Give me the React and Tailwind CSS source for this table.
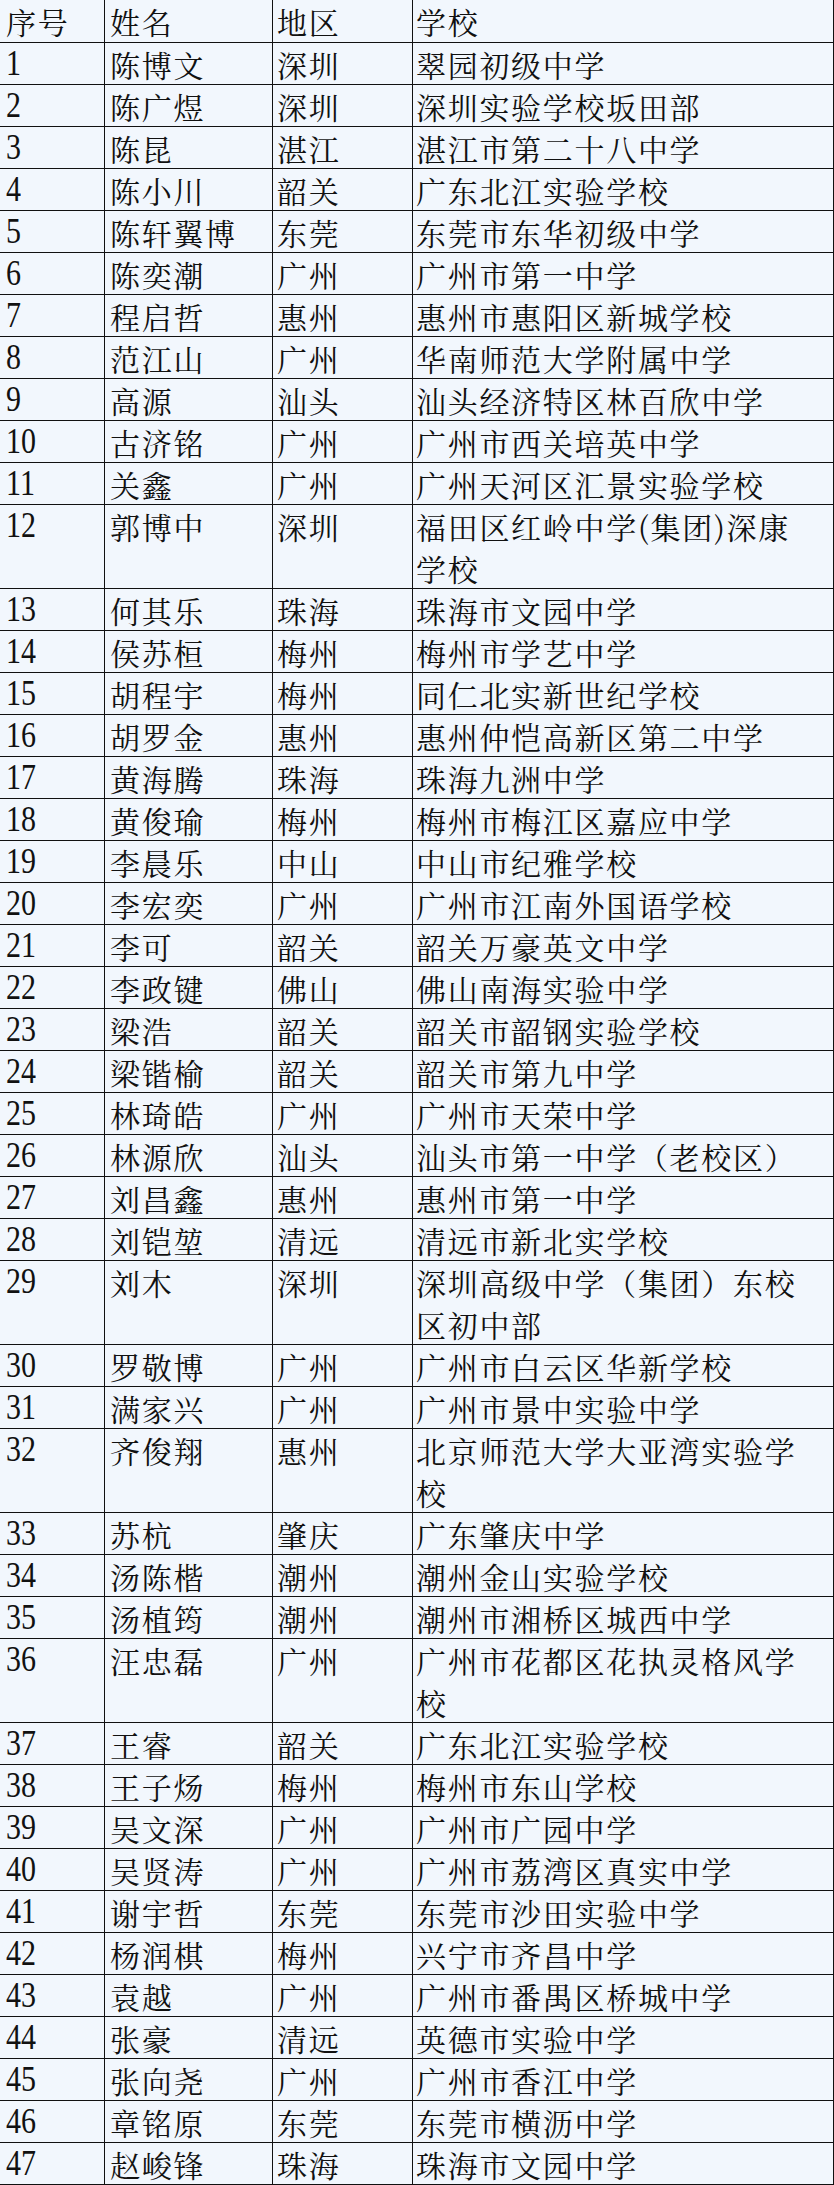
import React from "react";

const rows = [
  ["1", "陈博文", "深圳", ["翠园初级中学"]],
  ["2", "陈广煜", "深圳", ["深圳实验学校坂田部"]],
  ["3", "陈昆", "湛江", ["湛江市第二十八中学"]],
  ["4", "陈小川", "韶关", ["广东北江实验学校"]],
  ["5", "陈轩翼博", "东莞", ["东莞市东华初级中学"]],
  ["6", "陈奕潮", "广州", ["广州市第一中学"]],
  ["7", "程启哲", "惠州", ["惠州市惠阳区新城学校"]],
  ["8", "范江山", "广州", ["华南师范大学附属中学"]],
  ["9", "高源", "汕头", ["汕头经济特区林百欣中学"]],
  ["10", "古济铭", "广州", ["广州市西关培英中学"]],
  ["11", "关鑫", "广州", ["广州天河区汇景实验学校"]],
  ["12", "郭博中", "深圳", ["福田区红岭中学(集团)深康", "学校"]],
  ["13", "何其乐", "珠海", ["珠海市文园中学"]],
  ["14", "侯苏桓", "梅州", ["梅州市学艺中学"]],
  ["15", "胡程宇", "梅州", ["同仁北实新世纪学校"]],
  ["16", "胡罗金", "惠州", ["惠州仲恺高新区第二中学"]],
  ["17", "黄海腾", "珠海", ["珠海九洲中学"]],
  ["18", "黄俊瑜", "梅州", ["梅州市梅江区嘉应中学"]],
  ["19", "李晨乐", "中山", ["中山市纪雅学校"]],
  ["20", "李宏奕", "广州", ["广州市江南外国语学校"]],
  ["21", "李可", "韶关", ["韶关万豪英文中学"]],
  ["22", "李政键", "佛山", ["佛山南海实验中学"]],
  ["23", "梁浩", "韶关", ["韶关市韶钢实验学校"]],
  ["24", "梁锴榆", "韶关", ["韶关市第九中学"]],
  ["25", "林琦皓", "广州", ["广州市天荣中学"]],
  ["26", "林源欣", "汕头", ["汕头市第一中学（老校区）"]],
  ["27", "刘昌鑫", "惠州", ["惠州市第一中学"]],
  ["28", "刘铠堃", "清远", ["清远市新北实学校"]],
  ["29", "刘木", "深圳", ["深圳高级中学（集团）东校", "区初中部"]],
  ["30", "罗敬博", "广州", ["广州市白云区华新学校"]],
  ["31", "满家兴", "广州", ["广州市景中实验中学"]],
  ["32", "齐俊翔", "惠州", ["北京师范大学大亚湾实验学", "校"]],
  ["33", "苏杭", "肇庆", ["广东肇庆中学"]],
  ["34", "汤陈楷", "潮州", ["潮州金山实验学校"]],
  ["35", "汤植筠", "潮州", ["潮州市湘桥区城西中学"]],
  ["36", "汪忠磊", "广州", ["广州市花都区花执灵格风学", "校"]],
  ["37", "王睿", "韶关", ["广东北江实验学校"]],
  ["38", "王子炀", "梅州", ["梅州市东山学校"]],
  ["39", "吴文深", "广州", ["广州市广园中学"]],
  ["40", "吴贤涛", "广州", ["广州市荔湾区真实中学"]],
  ["41", "谢宇哲", "东莞", ["东莞市沙田实验中学"]],
  ["42", "杨润棋", "梅州", ["兴宁市齐昌中学"]],
  ["43", "袁越", "广州", ["广州市番禺区桥城中学"]],
  ["44", "张豪", "清远", ["英德市实验中学"]],
  ["45", "张向尧", "广州", ["广州市香江中学"]],
  ["46", "章铭原", "东莞", ["东莞市横沥中学"]],
  ["47", "赵峻锋", "珠海", ["珠海市文园中学"]],
];

const cjk =
  "font-['Noto_Serif_CJK_SC','Noto_Sans_CJK_SC',serif] text-[30px] leading-[42px] tracking-[1.7px] whitespace-nowrap";

function Row({ cells, header }) {
  const [num, name, region, school] = cells;
  const tall = school.length > 1;
  const h = header ? "h-[43px]" : tall ? "h-[84px]" : "h-[42px]";
  return (
    <div className={`grid grid-cols-[105px_168px_140px_421px] border-b border-[#111] ${h}`}>
      <div className="border-r border-[#111] pl-[6px]">
        {header ? (
          <div className={cjk}>{num}</div>
        ) : (
          <div className="font-['Liberation_Serif',serif] text-[30px] leading-[42px] pt-[3px]">
            <span className="inline-block origin-bottom scale-y-[1.17]">{num}</span>
          </div>
        )}
      </div>
      <div className={`border-r border-[#111] pl-[5px] ${cjk}`}>{name}</div>
      <div className={`border-r border-[#111] pl-[4px] ${cjk}`}>{region}</div>
      <div className={`border-r border-[#111] pl-[3px] ${cjk}`}>
        {school.map((s, i) => (
          <div key={i}>{s}</div>
        ))}
      </div>
    </div>
  );
}

export default function App() {
  return (
    <div className="w-[834px] bg-[#f2f7fd] text-[#111]">
      <Row header cells={["序号", "姓名", "地区", ["学校"]]} />
      {rows.map((r) => (
        <Row key={r[0]} cells={r} />
      ))}
    </div>
  );
}
